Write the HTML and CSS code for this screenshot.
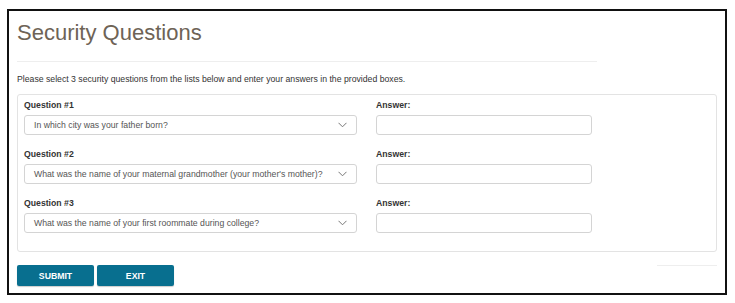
FILE: index.html
```html
<!DOCTYPE html>
<html>
<head>
<meta charset="utf-8">
<link rel="stylesheet" href="styles.css">
</head>
<body>
<div class="frame">
  <h1 class="title">Security Questions</h1>
  <div class="rule"></div>
  <p class="intro">Please select 3 security questions from the lists below and enter your answers in the provided boxes.</p>
  <div class="panel">
    <div class="row">
      <div class="qcol">
        <div class="label">Question #1</div>
        <div class="select"><span>In which city was your father born?</span><svg class="chev" width="9" height="6" viewBox="0 0 9 6"><path d="M0.5 0.8 L4.5 4.8 L8.5 0.8" fill="none" stroke="#777" stroke-width="1"/></svg></div>
      </div>
      <div class="acol">
        <div class="label">Answer:</div>
        <div class="input"></div>
      </div>
    </div>
    <div class="row">
      <div class="qcol">
        <div class="label">Question #2</div>
        <div class="select"><span>What was the name of your maternal grandmother (your mother's mother)?</span><svg class="chev" width="9" height="6" viewBox="0 0 9 6"><path d="M0.5 0.8 L4.5 4.8 L8.5 0.8" fill="none" stroke="#777" stroke-width="1"/></svg></div>
      </div>
      <div class="acol">
        <div class="label">Answer:</div>
        <div class="input"></div>
      </div>
    </div>
    <div class="row">
      <div class="qcol">
        <div class="label">Question #3</div>
        <div class="select"><span>What was the name of your first roommate during college?</span><svg class="chev" width="9" height="6" viewBox="0 0 9 6"><path d="M0.5 0.8 L4.5 4.8 L8.5 0.8" fill="none" stroke="#777" stroke-width="1"/></svg></div>
      </div>
      <div class="acol">
        <div class="label">Answer:</div>
        <div class="input"></div>
      </div>
    </div>
  </div>
  <div class="actions">
    <div class="buttons">
      <button class="btn">SUBMIT</button>
      <button class="btn">EXIT</button>
    </div>
    <div class="shortrule"></div>
  </div>
</div>
</body>
</html>
```
FILE: styles.css
```css
html, body {
  margin: 0;
  padding: 0;
  background: #fff;
}
body {
  font-family: "Liberation Sans", Arial, sans-serif;
  color: #333;
}
.frame {
  box-sizing: border-box;
  margin: 9px 0 0 7px;
  width: 720px;
  height: 286px;
  border: 2px solid #111;
  padding: 0 8px 0 8px;
}
.title {
  margin: 0;
  padding-top: 8px;
  font-weight: normal;
  font-size: 22px;
  line-height: 27px;
  color: #6e6356;
}
.rule {
  margin-top: 15px;
  width: 580px;
  height: 1px;
  background: #eeeeee;
}
.intro {
  margin: 11px 0 0 0;
  font-size: 8.7px;
  line-height: 12px;
  color: #333;
}
.panel {
  margin-top: 9px;
  border: 1px solid #e3e3e3;
  border-radius: 3px;
  padding: 4px 6px 18px 6px;
  display: flex;
  flex-direction: column;
  gap: 13px;
}
.row {
  display: flex;
  gap: 19px;
}
.qcol { width: 333px; }
.acol { width: 216px; }
.label {
  font-size: 8.7px;
  font-weight: bold;
  line-height: 12px;
  color: #333;
  margin-bottom: 4px;
}
.select, .input {
  box-sizing: border-box;
  height: 20px;
  border: 1px solid #d4d4d4;
  border-radius: 3px;
  background: #fff;
}
.select {
  display: flex;
  align-items: center;
  justify-content: space-between;
  padding: 0 9px 0 9px;
  font-size: 8.7px;
  color: #555;
}
.chev { display: block; }
.actions {
  margin-top: 13px;
  display: flex;
  justify-content: space-between;
  align-items: flex-start;
}
.buttons {
  display: flex;
  gap: 3px;
}
.btn {
  width: 77px;
  height: 21px;
  border: none;
  border-radius: 2px;
  background: #086f8f;
  color: #fff;
  font-family: "Liberation Sans", Arial, sans-serif;
  font-weight: bold;
  font-size: 8.7px;
  padding: 0;
  box-shadow: 0 1px 1px rgba(0,0,0,0.2);
}
.shortrule {
  width: 60px;
  height: 1px;
  background: #eeeeee;
}
```
